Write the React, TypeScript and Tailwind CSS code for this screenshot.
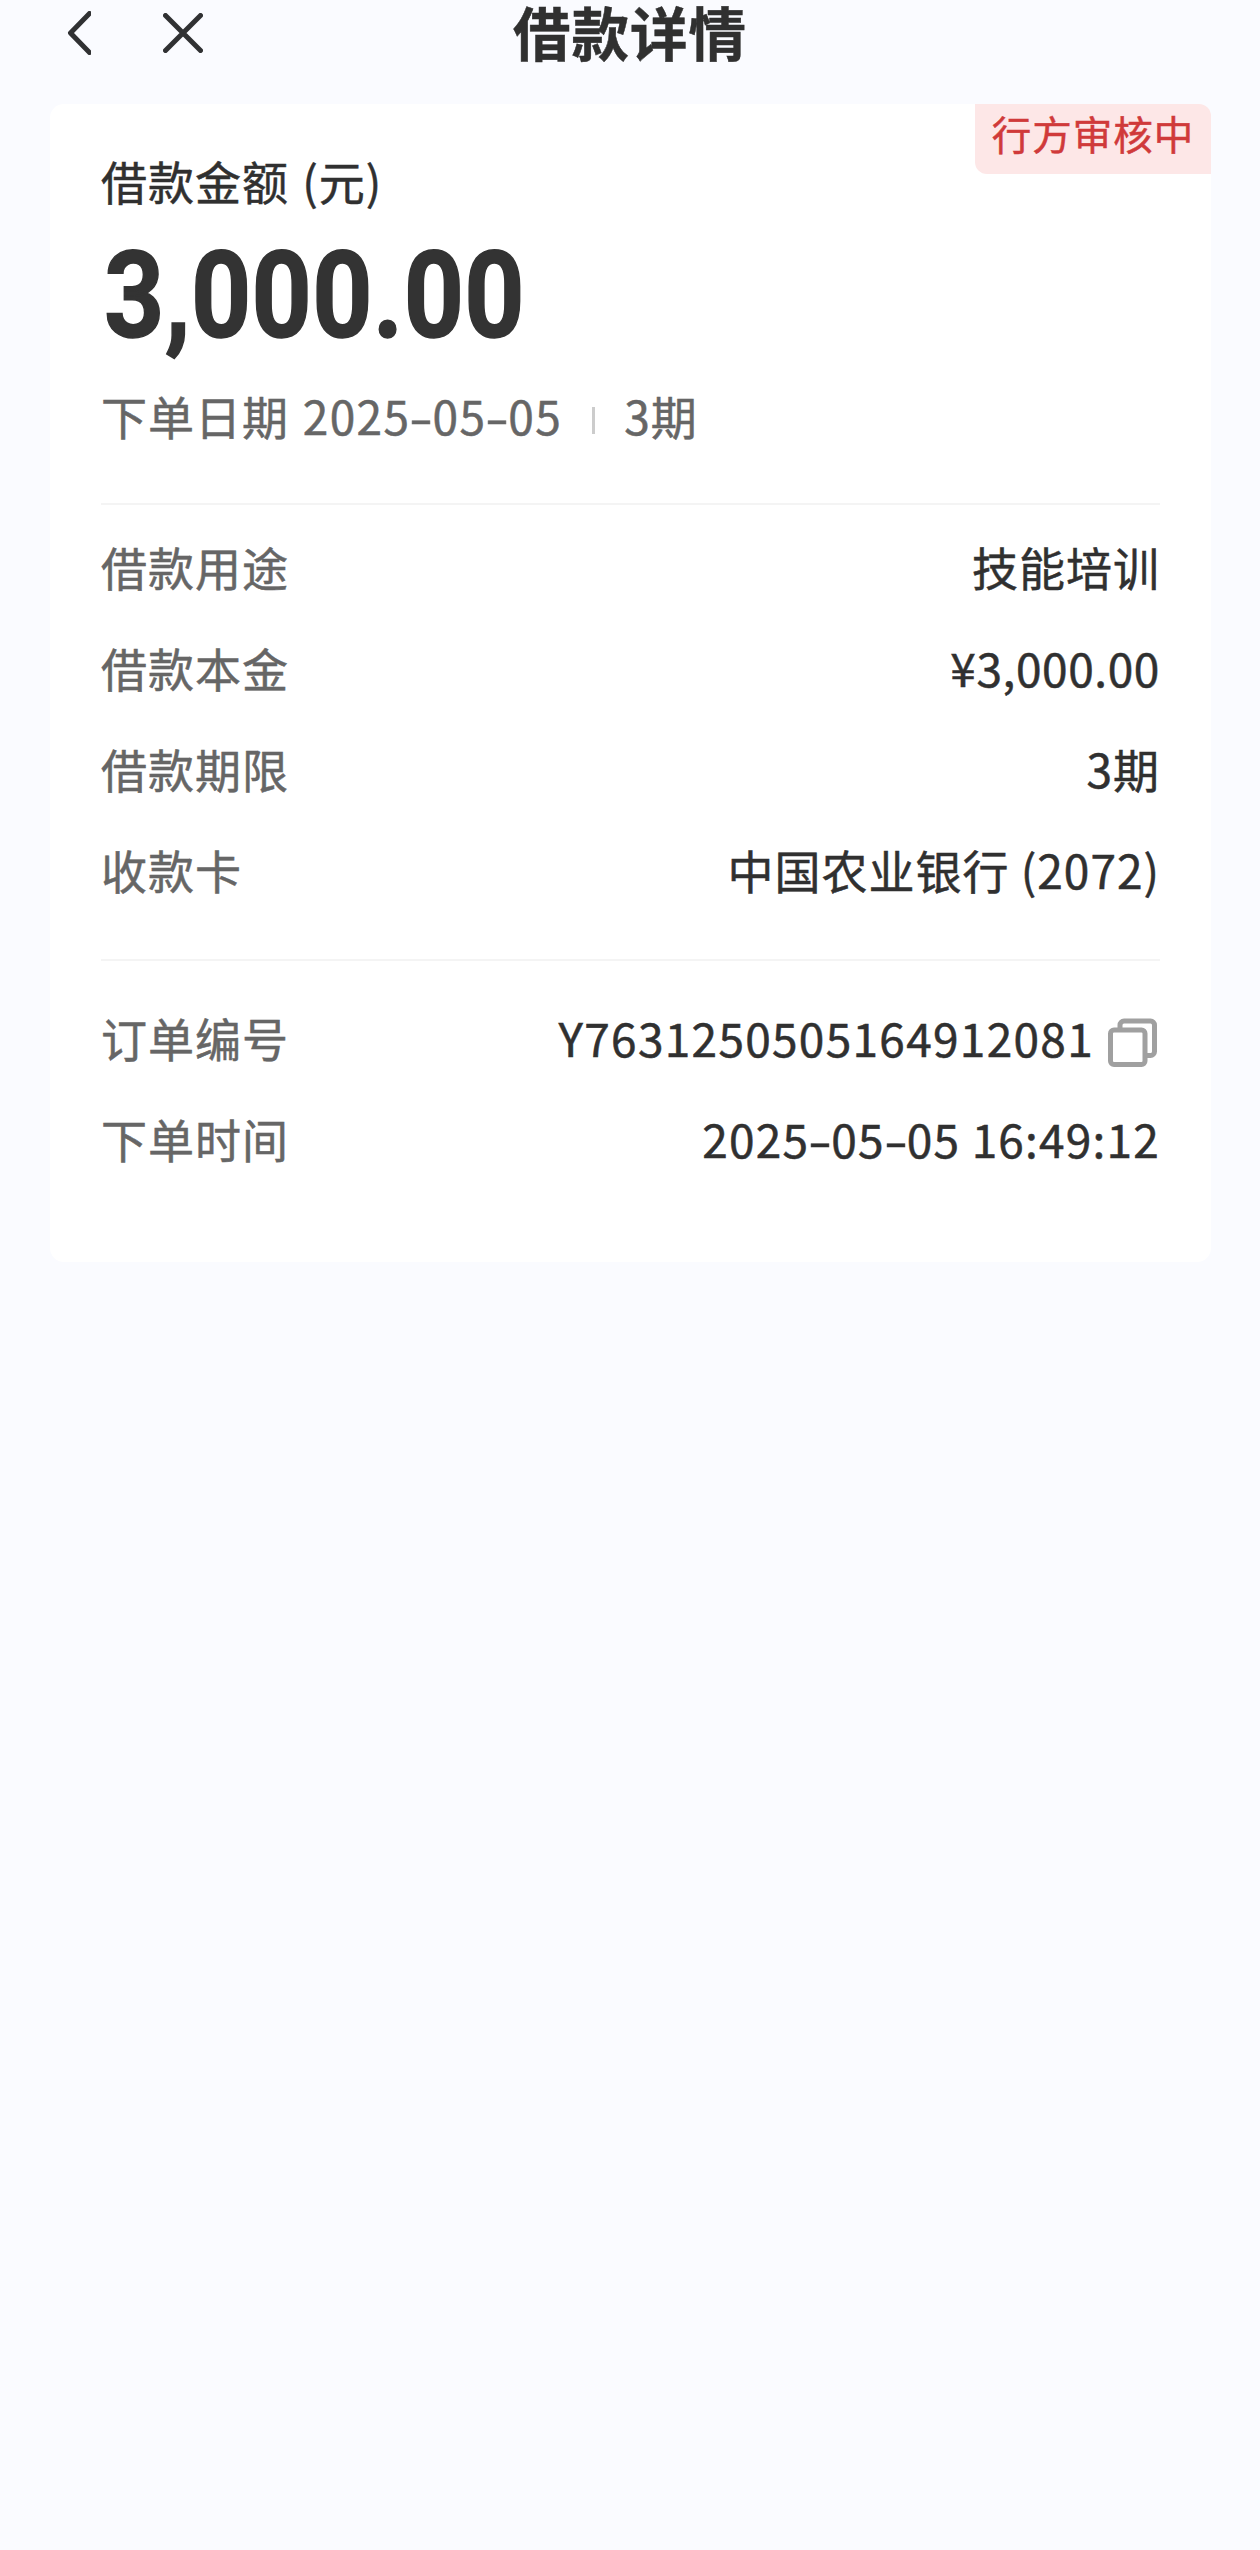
import { Fragment } from "react";

const loanRows = [
  { label: "借款用途", value: "技能培训" },
  { label: "借款本金", value: "¥3,000.00", tight: true },
  { label: "借款期限", value: "3期" },
  { label: "收款卡", value: "中国农业银行 (2072)" },
];

function BackIcon() {
  return (
    <svg className="h-[44px] w-[24px]" viewBox="0 0 24 44" fill="none" stroke="#303133" strokeWidth="5" strokeLinecap="round" strokeLinejoin="round">
      <path d="M22.5 2.500 3.500 22l19 19.500" />
    </svg>
  );
}

function CloseIcon() {
  return (
    <svg className="h-[40px] w-[40px]" viewBox="0 0 40 40" fill="none" stroke="#303133" strokeWidth="5" strokeLinecap="round">
      <path d="M2.500 2.500l35 35M37.500 2.500l-35 35" />
    </svg>
  );
}

function CopyIcon() {
  return (
    <svg className="mt-[12px] mr-[2px] h-[50px] w-[50px]" viewBox="0 0 50 50" fill="none" stroke="#a0a0a0" strokeWidth="5">
      <rect x="2.500" y="12" width="34.500" height="34.500" rx="3.500" />
      <path d="M12 11.500V7a4 4 0 0 1 4-4H42.500a4 4 0 0 1 4 4V33.500a4 4 0 0 1-4 4H38.500" />
    </svg>
  );
}

// hyphens are drawn wider than the font's own
function DateText({ value }: { value: string }) {
  return (
    <>
      {value.split("-").map((part, i) => (
        <Fragment key={i}>
          {i > 0 && <span className="inline-block w-[22px] scale-x-150 text-center tracking-normal">-</span>}
          {part}
        </Fragment>
      ))}
    </>
  );
}

function Row({ label, children }: { label: string; children: React.ReactNode }) {
  return (
    <div className="flex h-[101px] items-center justify-between">
      <span className="text-[#666]">{label}</span>
      <span className="flex items-center whitespace-pre text-[#303030]">{children}</span>
    </div>
  );
}

export default function App() {
  return (
    <div className="min-h-[2550px] w-[1260px] bg-[#fafbff] font-['Noto_Sans_CJK_SC',sans-serif] text-[46px] leading-none tracking-[1px] text-[#303030] [-webkit-text-stroke:0.5px]">
      <header className="grid h-[104px] grid-cols-[1fr_auto_1fr] items-start">
        <div className="flex items-center gap-[72px] pt-[11px] pl-[67px]">
          <BackIcon />
          <CloseIcon />
        </div>
        <h1 className="pt-px text-[57.500px] leading-[60px] font-bold">借款详情</h1>
      </header>

      <main className="relative mr-[49px] ml-[50px] h-[1158px] rounded-[14px] bg-white px-[51px] pt-[49px]">
        <div className="absolute top-0 right-0 flex h-[70px] w-[236px] justify-center rounded-tr-[12px] rounded-bl-[12px] bg-[#fde7e7] pt-[9px] text-[39.500px] text-[#d03a3a]">
          行方审核中
        </div>

        <div className="h-[54px] leading-[54px]">
          借款金额<span className="ml-[2px]"> (元)</span>
        </div>
        <div className="mt-[23px] ml-[3px] h-[132px] origin-left scale-x-[0.876] font-[Roboto,sans-serif] text-[120px] leading-[132px] font-bold tracking-[0.4px] text-[#333] [-webkit-text-stroke:1.5px]">
          3,000.00
        </div>
        <div className="mt-[25px] flex h-[56px] items-center text-[#666]">
          <span className="whitespace-pre">
            下单日期<span className="ml-[2px] tracking-[1.4px]"> <DateText value="2025-05-05" /></span>
          </span>
          <span className="mt-[11px] mr-[29px] ml-[30px] h-[27px] w-[3px] bg-[#ccc]" />
          <span>3期</span>
        </div>

        <div className="mt-[60px] h-[2px] bg-[#f4f4f4]" />
        <div className="pt-[10px] pb-[40px]">
          {loanRows.map((row) => (
            <Row key={row.label} label={row.label}>
              <span className={row.tight ? "tracking-[0.6px]" : ""}>{row.value}</span>
            </Row>
          ))}
        </div>
        <div className="h-[2px] bg-[#f4f4f4]" />
        <div className="pt-[25px]">
          <Row label="订单编号">
            <span className="mr-[14px] tracking-[1.3px]">Y7631250505164912081</span>
            <CopyIcon />
          </Row>
          <Row label="下单时间">
            <span className="tracking-[1.2px]">
              <DateText value="2025-05-05 16:49:12" />
            </span>
          </Row>
        </div>
      </main>
    </div>
  );
}
